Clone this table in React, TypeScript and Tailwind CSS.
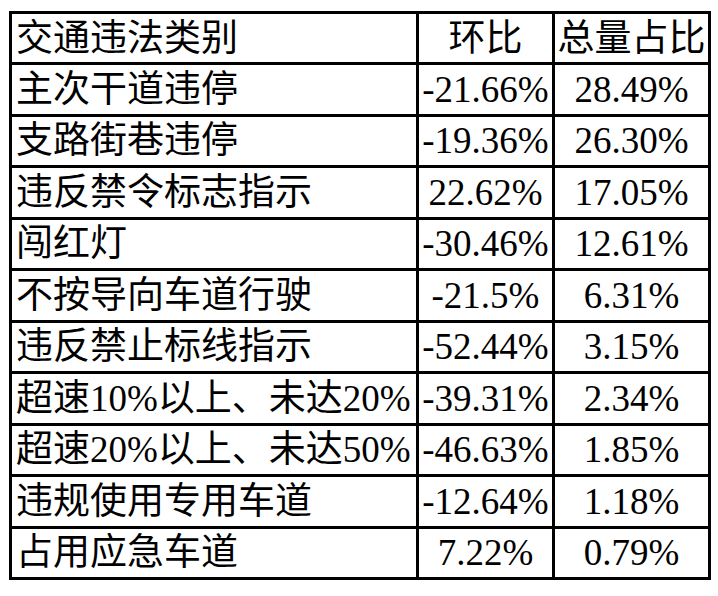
const rows: [string, string, string][] = [
  ["主次干道违停", "-21.66%", "28.49%"],
  ["支路街巷违停", "-19.36%", "26.30%"],
  ["违反禁令标志指示", "22.62%", "17.05%"],
  ["闯红灯", "-30.46%", "12.61%"],
  ["不按导向车道行驶", "-21.5%", "6.31%"],
  ["违反禁止标线指示", "-52.44%", "3.15%"],
  ["超速10%以上、未达20%", "-39.31%", "2.34%"],
  ["超速20%以上、未达50%", "-46.63%", "1.85%"],
  ["违规使用专用车道", "-12.64%", "1.18%"],
  ["占用应急车道", "7.22%", "0.79%"],
];

const cell =
  "border-[3px] border-black font-normal whitespace-nowrap text-[37px] leading-none font-['Liberation_Serif','Noto_Sans_CJK_SC',serif]";

export default function App() {
  return (
    <div className="w-[718px] h-[596px] bg-white text-black pt-[11px] pl-[9px]">
      <table className="table-fixed border-collapse border-[3px] border-black">
        <colgroup>
          <col className="w-[407px]" />
          <col className="w-[136px]" />
          <col className="w-[156px]" />
        </colgroup>
        <thead>
          <tr className="h-[51px]">
            <th className={`${cell} text-left pl-[4px]`}>交通违法类别</th>
            <th className={`${cell} text-center`}>环比</th>
            <th className={`${cell} text-center`}>总量占比</th>
          </tr>
        </thead>
        <tbody>
          {rows.map(([name, mom, share]) => (
            <tr key={name} className="h-[51.5px]">
              <td className={`${cell} text-left pl-[4px]`}>{name}</td>
              <td className={`${cell} text-center`}>{mom}</td>
              <td className={`${cell} text-center`}>{share}</td>
            </tr>
          ))}
        </tbody>
      </table>
    </div>
  );
}
